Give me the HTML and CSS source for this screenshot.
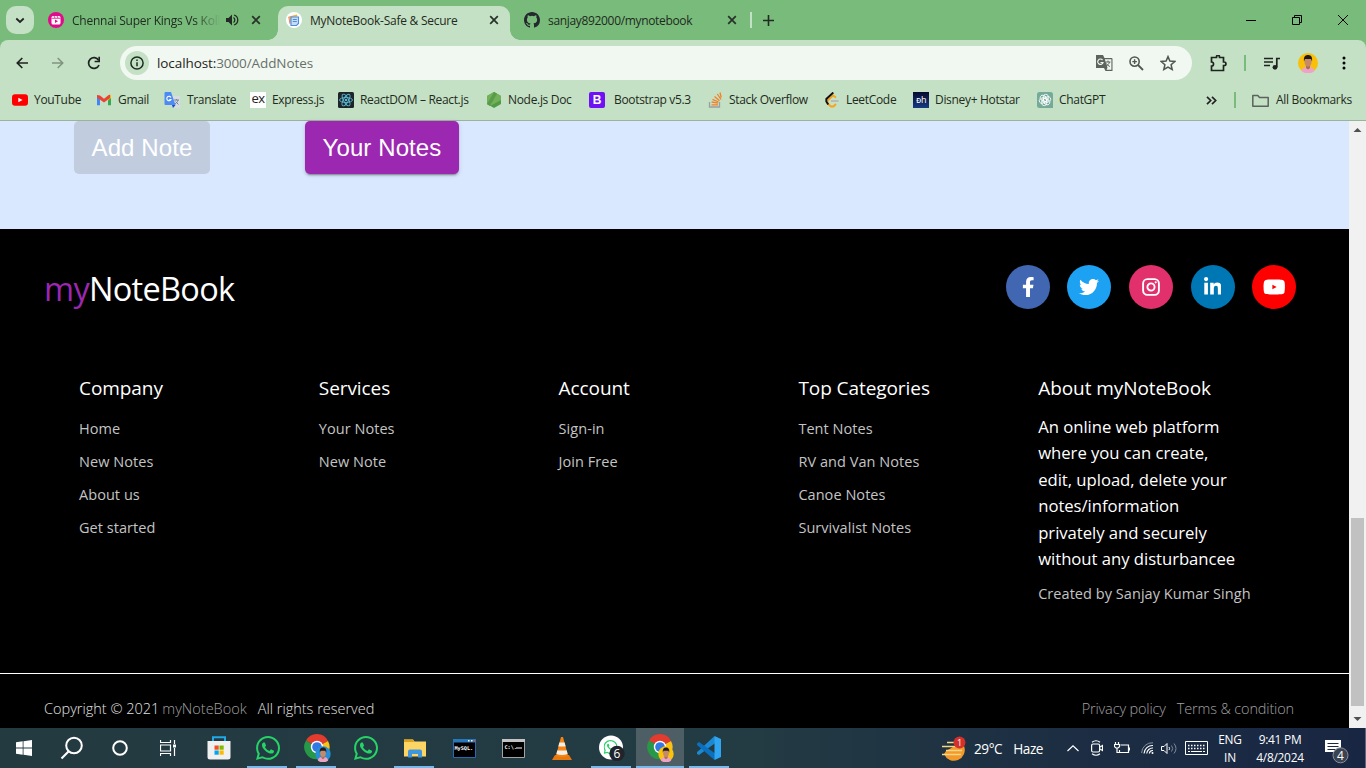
FILE: index.html
```html
<!DOCTYPE html>
<html lang="en">
<head>
<meta charset="utf-8">
<title>MyNoteBook-Safe &amp; Secure</title>
<link rel="stylesheet" href="styles.css">
</head>
<body>
<svg class="defs" aria-hidden="true">
  <symbol id="close" viewBox="0 0 10 10"><path d="M1.2 1.2l7.6 7.6M8.8 1.2L1.2 8.8" fill="none" stroke="#263128" stroke-width="1.7"/></symbol>
  <symbol id="whatsapp" viewBox="0 32 448 448"><path d="M380.9 97.1C339 55.1 283.2 32 223.9 32c-122.4 0-222 99.6-222 222 0 39.1 10.2 77.3 29.6 111L0 480l117.7-30.9c32.4 17.7 68.9 27 106.1 27h.1c122.3 0 224.1-99.6 224.1-222 0-59.3-25.2-115-67.1-157zm-157 341.6c-33.2 0-65.7-8.9-94-25.7l-6.7-4-69.8 18.3L72 359.2l-4.4-7c-18.5-29.4-28.2-63.3-28.2-98.2 0-101.7 82.8-184.5 184.6-184.5 49.3 0 95.6 19.2 130.4 54.1 34.8 34.9 56.2 81.2 56.1 130.5 0 101.8-84.9 184.6-186.6 184.6zm101.2-138.2c-5.5-2.8-32.8-16.2-37.9-18-5.1-1.9-8.8-2.8-12.5 2.8-3.7 5.6-14.3 18-17.6 21.8-3.2 3.7-6.5 4.2-12 1.4-32.6-16.3-54-29.1-75.5-66-5.7-9.8 5.7-9.1 16.3-30.3 1.8-3.7.9-6.9-.5-9.7-1.4-2.8-12.5-30.1-17.1-41.2-4.5-10.8-9.1-9.3-12.5-9.5-3.2-.2-6.9-.2-10.6-.2-3.7 0-9.7 1.4-14.8 6.9-5.1 5.6-19.4 19-19.4 46.3 0 27.3 19.9 53.7 22.6 57.4 2.8 3.7 39.1 59.7 94.8 83.8 35.2 15.2 49 16.5 66.6 13.9 10.7-1.6 32.8-13.4 37.4-26.4 4.6-13 4.6-24.1 3.2-26.4-1.3-2.5-5-3.9-10.5-6.6z" fill="#25d366"/></symbol>
  <symbol id="chrome" viewBox="0 0 26 26"><path d="M13 13 2 6.600A12.300 12.300 0 0 1 24 7z" fill="#e33b2e"/><path d="M13 13 24 7a12.300 12.300 0 0 1-11 18.300z" fill="#fbc116"/><path d="M13 13v12.300A12.300 12.300 0 0 1 2 6.600z" fill="#279847"/><circle cx="13" cy="13" r="6.200" fill="#fff"/><circle cx="13" cy="13" r="4.800" fill="#3478e5"/></symbol>
  <symbol id="person" viewBox="0 0 20 20"><path d="M3.500 18c1-3.500 3.500-4.500 6.500-4.500s5.500 1 6.500 4.500A10 10 0 0 1 3.500 18z" fill="#eda3c4"/><path d="M8 12h4v3l-2 1.500L8 15z" fill="#a86e50"/><ellipse cx="10" cy="9" rx="3.500" ry="4.700" fill="#c48a69"/><path d="M6 8.500C5.500 4 7 2 10 2s4.700 2 4 6.500L13 6H7z" fill="#20191a"/></symbol>
</svg>

<header class="tabs">
  <button class="tab-search"><svg width="10" height="7" viewBox="0 0 10 7"><path d="M1.300 1.500L5 5l3.700-3.500" fill="none" stroke="#1f2420" stroke-width="1.800"/></svg></button>
  <div class="tab tab-first">
    <svg width="16" height="16" viewBox="0 0 16 16"><circle cx="8" cy="8" r="8" fill="#e20a8c"/><rect x="3.500" y="4" width="9" height="8.500" rx="1.500" fill="#fff"/><path d="M3.500 6.300h9M6 4l1 2M9 4l1 2" stroke="#e20a8c" stroke-width=".8"/><path d="M7 7.500l3 1.800-3 1.800z" fill="#e20a8c"/></svg>
    <span class="tab-title fade">Chennai Super Kings Vs Kolk</span>
    <svg class="sound" width="13" height="12" viewBox="0 0 13 12"><path d="M0 4v4h2.500L6 11.500V.5L2.500 4z" fill="#222b23"/><path d="M7.500 3.500c1.700 1 1.700 4 0 5M8 1c5 1.500 5 8.500 0 10" fill="none" stroke="#222b23" stroke-width="1.300"/></svg>
    <svg class="x" width="10" height="10"><use href="#close"/></svg>
  </div>
  <div class="tab tab-active">
    <svg width="16" height="16" viewBox="0 0 16 16"><circle cx="8" cy="8" r="8" fill="#fff"/><path d="M3 4.500l8-2 .5 2-6 .5-1 7z" fill="#f3ae38"/><path d="M3 4.500l1.500 8-1-1L2.300 5z" fill="#e86b55"/><path d="M5 5h7.500v6.500l-2 2H5z" fill="#c5dcf6" stroke="#4a8de0" stroke-width="1.100"/><path d="M6.800 7.500h4M6.800 9.500h4" stroke="#4a8de0" stroke-width="1.100"/></svg>
    <span class="tab-title">MyNoteBook-Safe &amp; Secure</span>
    <svg class="x" width="10" height="10"><use href="#close"/></svg>
  </div>
  <div class="tab tab-last">
    <svg width="16" height="16" viewBox="0 0 16 16"><path fill="#24292e" d="M8 0C3.580 0 0 3.580 0 8c0 3.540 2.290 6.530 5.470 7.590.4.070.55-.17.55-.38 0-.19-.01-.82-.01-1.490-2.010.37-2.530-.49-2.690-.94-.09-.23-.48-.94-.82-1.130-.28-.15-.68-.52-.01-.53.63-.01 1.080.58 1.230.82.72 1.210 1.870.87 2.330.66.07-.52.28-.87.51-1.070-1.780-.2-3.640-.89-3.640-3.950 0-.87.31-1.590.82-2.150-.08-.2-.36-1.020.08-2.120 0 0 .67-.21 2.200.82a7.600 7.600 0 0 1 4 0c1.530-1.040 2.200-.82 2.200-.82.44 1.100.16 1.920.08 2.120.51.56.82 1.270.82 2.150 0 3.070-1.870 3.750-3.650 3.950.29.25.54.73.54 1.480 0 1.070-.01 1.930-.01 2.200 0 .21.15.46.55.38A8.010 8.010 0 0 0 16 8c0-4.420-3.580-8-8-8z"/></svg>
    <span class="tab-title">sanjay892000/mynotebook</span>
    <svg class="x" width="10" height="10"><use href="#close"/></svg>
  </div>
  <i class="tab-sep"></i>
  <svg class="plus" width="11" height="11" viewBox="0 0 11 11"><path d="M5.500 0v11M0 5.500h11" stroke="#222b23" stroke-width="1.600"/></svg>
  <div class="window-controls">
    <svg width="10" height="10" viewBox="0 0 10 10"><path d="M0 5.500h10" stroke="#000"/></svg>
    <svg width="10" height="10" viewBox="0 0 10 10"><path d="M.5 2.500h7v7h-7zM2.500 2.500v-2h7v7h-2" fill="none" stroke="#000"/></svg>
    <svg width="10" height="10" viewBox="0 0 10 10"><path d="M0 0l10 10M10 0L0 10" stroke="#000"/></svg>
  </div>
</header>

<div class="chrome">
  <nav class="toolbar">
    <svg width="12" height="12" viewBox="0 0 12 12"><path d="M12 6H1.500M6.300 1L1.300 6l5 5" fill="none" stroke="#1f2320" stroke-width="1.700"/></svg>
    <svg width="12" height="12" viewBox="0 0 12 12"><path d="M0 6h10.500M5.700 1l5 5-5 5" fill="none" stroke="#82947f" stroke-width="1.600"/></svg>
    <svg width="14" height="14" viewBox="0 0 14 14"><path d="M12 9A5.400 5.400 0 1 1 11.600 4.200" fill="none" stroke="#1f2320" stroke-width="1.700"/><path d="M13 .8v5.400H7.600V4.700h3.800V.8z" fill="#1f2320"/></svg>
    <div class="omnibox">
      <span class="info"><svg width="14" height="14" viewBox="0 0 14 14"><circle cx="7" cy="7" r="6.100" fill="none" stroke="#1e2c20" stroke-width="1.500"/><path d="M7 6.200v4M7 3.500v1.600" stroke="#1e2c20" stroke-width="1.500"/></svg></span>
      <span class="url"><b>localhost:</b>3000/AddNotes</span>
      <div class="omni-actions">
        <svg width="17" height="17" viewBox="0 0 17 17"><path d="M0 0h7l1.500 3H15.500a1 1 0 0 1 1 1v12h-7L8 13H0z" fill="#5d645e"/><path d="M8.800 4.200h6.600v10.600H10.500l1-2z" fill="#f1f8f1"/><path d="M6.500 5A2.700 2.700 0 1 0 7 7.500H4.500" fill="none" stroke="#f1f8f1" stroke-width="1.200"/><path d="M9.500 7h5M12 5.500V7M13.500 7c-.5 2-2 3.500-3.500 4M10.500 8.500c.8 1.500 2 2.300 3.300 3" fill="none" stroke="#5d645e"/></svg>
        <svg width="15" height="15" viewBox="0 0 15 15"><circle cx="5.600" cy="5.600" r="4.600" fill="none" stroke="#505751" stroke-width="1.600"/><path d="M9 9l5 5" stroke="#505751" stroke-width="1.800"/><path d="M5.600 3.300v4.600M3.300 5.600h4.600" stroke="#505751" stroke-width="1.400"/></svg>
        <svg width="16" height="16" viewBox="0 0 16 16"><path d="M8 1.600l1.900 4.500 4.900.4-3.700 3.200 1.100 4.800L8 12l-4.200 2.500 1.100-4.800L1.200 6.500l4.900-.4z" fill="none" stroke="#505751" stroke-width="1.500"/></svg>
      </div>
    </div>
    <svg width="17" height="17" viewBox="0 0 17 17"><path d="M1.500 2.500h5V1.800a1.500 1.500 0 0 1 3 0v.7h4v4.500h.7a1.500 1.500 0 0 1 0 3.500h-.7v5H1.500v-4.300c2.700 0 2.700-4.200 0-4.200z" fill="none" stroke="#1f2320" stroke-width="1.700"/></svg>
    <i class="sep"></i>
    <svg width="16" height="13" viewBox="0 0 16 13"><path d="M0 1.500h9M0 5h9M0 8.500h6" stroke="#1f2320" stroke-width="1.700"/><path d="M12.800 10V1.500H16" fill="none" stroke="#1f2320" stroke-width="1.700"/><circle cx="11" cy="10.300" r="2.400" fill="#1f2320"/></svg>
    <svg width="20" height="20" viewBox="0 0 20 20"><circle cx="10" cy="10" r="10" fill="#fabf07"/><use href="#person"/></svg>
    <svg width="4" height="14" viewBox="0 0 4 14"><circle cx="2" cy="2" r="1.500"/><circle cx="2" cy="7" r="1.500"/><circle cx="2" cy="12" r="1.500"/></svg>
  </nav>
  <nav class="bookmarks">
    <a><svg width="16" height="16" viewBox="0 0 16 16"><rect y="2.300" width="16" height="11.400" rx="3" fill="#f00"/><path d="M6.300 5.700l4.300 2.300-4.300 2.300z" fill="#fff"/></svg><span>YouTube</span></a>
    <a><svg width="16" height="16" viewBox="0 0 16 16"><path d="M1 3v10.300h3V7z" fill="#4285f4"/><path d="M15 3v10.300h-3V7z" fill="#34a853"/><path d="M12 3.500l3-.8V6l-3 2.500z" fill="#fbbc04"/><path d="M1 3l3 .5 4 3.200 4-3.200 2-1V6L8 10.500 1 5.500z" fill="#ea4335"/></svg><span>Gmail</span></a>
    <a><svg width="17" height="16" viewBox="0 0 17 16"><path d="M7 4h9v12H9z" fill="#d7dce1"/><path d="M1 0h6l4.500 13H1.500A1 1 0 0 1 .5 12V1z" fill="#4c8bf5"/><path d="M8 13h3.500L9 16z" fill="#1b48c4"/><path d="M7 5.500A2.200 2.200 0 1 0 7 7.500H5.300" fill="none" stroke="#fff" stroke-width="1.100"/><path d="M10 8h5M12.500 7v1M14 8c-.5 2-1.500 3-3 4M11.500 9.500l3 3" fill="none" stroke="#738593"/></svg><span>Translate</span></a>
    <a><i class="ex">ex</i><span>Express.js</span></a>
    <a><svg width="16" height="16" viewBox="0 0 16 16"><rect width="16" height="16" rx="1.500" fill="#1d252b"/><g fill="none" stroke="#5cb9d4" stroke-width=".9"><ellipse cx="8" cy="8" rx="6.500" ry="2.500"/><ellipse cx="8" cy="8" rx="6.500" ry="2.500" transform="rotate(60 8 8)"/><ellipse cx="8" cy="8" rx="6.500" ry="2.500" transform="rotate(120 8 8)"/></g><circle cx="8" cy="8" r="1.300" fill="#5cb9d4"/></svg><span>ReactDOM – React.js</span></a>
    <a><svg width="16" height="16" viewBox="0 0 16 16"><path d="M8 0l7 4v8l-7 4-7-4V4z" fill="#519b47"/><path d="M8 0l7 4v4L4 14l-3-2V4z" fill="#72b159"/><path d="M8 0l3 1.700L4 14l-3-2z" fill="#438a3d" opacity=".55"/></svg><span>Node.js Doc</span></a>
    <a class="wide-gap"><i class="bs">B</i><span>Bootstrap v5.3</span></a>
    <a><svg width="15" height="16" viewBox="0 0 15 16"><path d="M1.500 10v5h10v-5" fill="none" stroke="#9b9fa1" stroke-width="1.300"/><path d="M3.500 12.800h6.500M3.600 10l6.400 1.200M4.500 7.300l6 2.700M6.500 4.500l5 4.300M9.300 2l3.700 5.500M12 .5l1.200 5" stroke="#f48024" stroke-width="1.300"/></svg><span>Stack Overflow</span></a>
    <a><svg width="16" height="16" viewBox="0 0 16 16"><path d="M12 5.500L9 3.500 3.500 8.500v3L7 14.500h2.500L12 12" fill="none" stroke="#faa21b" stroke-width="1.900"/><path d="M9.300.5L2.300 7v2.500l2 3" fill="none" stroke="#111" stroke-width="1.900"/><path d="M7 9h7.500" stroke="#b4b5b1" stroke-width="1.700"/></svg><span>LeetCode</span></a>
    <a><i class="dh">ᴆh</i><span>Disney+ Hotstar</span></a>
    <a><svg width="16" height="16" viewBox="0 0 16 16"><path d="M2.500 0h11A2.500 2.500 0 0 1 16 2.500V16H2.500A2.500 2.500 0 0 1 0 13.500v-11A2.500 2.500 0 0 1 2.500 0z" fill="#75aa9a"/><g fill="none" stroke="#fff" stroke-width=".8"><rect id="petal" x="6.300" y="2.300" width="5" height="7.500" rx="2.500"/><use href="#petal" transform="rotate(60 8 8)"/><use href="#petal" transform="rotate(120 8 8)"/><use href="#petal" transform="rotate(180 8 8)"/><use href="#petal" transform="rotate(240 8 8)"/><use href="#petal" transform="rotate(300 8 8)"/></g></svg><span>ChatGPT</span></a>
    <div class="all-bookmarks">
      <svg width="11" height="9" viewBox="0 0 11 9"><path d="M1 .8l3.700 3.700L1 8.200M6 .8l3.700 3.700L6 8.200" fill="none" stroke="#222" stroke-width="1.700"/></svg>
      <i class="sep"></i>
      <a><svg width="17" height="13" viewBox="0 0 17 13"><path d="M.8 1.500h5l1.700 2h8.700v8.700H.8z" fill="none" stroke="#5b635c" stroke-width="1.500" stroke-linejoin="round"/></svg><span>All Bookmarks</span></a>
    </div>
  </nav>
</div>

<div class="viewport">
  <main>
    <section class="actions">
      <button class="btn btn-add">Add Note</button>
      <button class="btn btn-your">Your Notes</button>
    </section>
    <footer>
      <div class="footer-top">
        <div class="logo"><span>my</span>NoteBook</div>
        <div class="socials">
          <a class="fb"><svg height="20" viewBox="0 0 320 512"><path d="M279.140 288l14.220-92.660h-88.910v-60.130c0-25.350 12.420-50.060 52.240-50.060h40.420V6.260S260.430 0 225.360 0c-73.220 0-121.080 44.380-121.080 124.720v70.620H22.890V288h81.390v224h100.170V288z"/></svg></a>
          <a class="tw"><svg height="20" viewBox="0 0 512 512"><path d="M459.370 151.716c.325 4.548.325 9.097.325 13.645 0 138.720-105.583 298.558-298.558 298.558-59.452 0-114.680-17.219-161.137-47.106 8.447.974 16.568 1.299 25.340 1.299 49.055 0 94.213-16.568 130.274-44.832-46.132-.975-84.792-31.188-98.112-72.772 6.498.974 12.995 1.624 19.818 1.624 9.421 0 18.843-1.300 27.614-3.573-48.081-9.747-84.143-51.980-84.143-102.985v-1.299c13.969 7.797 30.214 12.670 47.431 13.319-28.264-18.843-46.781-51.005-46.781-87.391 0-19.492 5.197-37.360 14.294-52.954 51.655 63.675 129.300 105.258 216.365 109.807-1.624-7.797-2.599-15.918-2.599-24.040 0-57.828 46.782-104.934 104.934-104.934 30.213 0 57.502 12.670 76.670 33.137 23.715-4.548 46.456-13.320 66.599-25.340-7.798 24.366-24.366 44.833-46.132 57.827 21.117-2.273 41.584-8.122 60.426-16.243-14.292 20.791-32.161 39.308-52.628 54.253z"/></svg></a>
          <a class="ig"><svg height="20" viewBox="0 0 20 20"><rect x="2.100" y="2.100" width="15.800" height="15.800" rx="4.300" fill="none" stroke="#fff" stroke-width="1.900"/><circle cx="10" cy="10" r="3.600" fill="none" stroke="#fff" stroke-width="1.900"/><circle cx="14.700" cy="5.300" r="1.100"/></svg></a>
          <a class="li"><svg height="20" viewBox="0 0 448 512"><path d="M100.280 448H7.400V148.900h92.880zM53.790 108.100C24.090 108.100 0 83.500 0 53.800a53.790 53.790 0 0 1 107.580 0c0 29.700-24.100 54.300-53.790 54.300zM447.900 448h-92.680V302.400c0-34.700-.7-79.200-48.290-79.200-48.290 0-55.690 37.700-55.690 76.700V448h-92.780V148.900h89.080v40.800h1.300c12.400-23.500 42.690-48.300 87.880-48.300 94 0 111.280 61.900 111.280 142.300V448z"/></svg></a>
          <a class="yt"><svg height="20" viewBox="0 0 576 512"><path d="M549.655 124.083c-6.281-23.650-24.787-42.276-48.284-48.597C458.781 64 288 64 288 64S117.220 64 74.629 75.486c-23.497 6.322-42.003 24.947-48.284 48.597-11.412 42.867-11.412 132.305-11.412 132.305s0 89.438 11.412 132.305c6.281 23.650 24.787 41.500 48.284 47.821C117.220 448 288 448 288 448s170.780 0 213.371-11.486c23.497-6.321 42.003-24.171 48.284-47.821 11.412-42.867 11.412-132.305 11.412-132.305s0-89.438-11.412-132.305zm-310 192V196l110 60.500z"/></svg></a>
        </div>
      </div>
      <div class="columns">
        <div class="col"><h2>Company</h2><a>Home</a><a>New Notes</a><a>About us</a><a>Get started</a></div>
        <div class="col"><h2>Services</h2><a>Your Notes</a><a>New Note</a></div>
        <div class="col"><h2>Account</h2><a>Sign-in</a><a>Join Free</a></div>
        <div class="col"><h2>Top Categories</h2><a>Tent Notes</a><a>RV and Van Notes</a><a>Canoe Notes</a><a>Survivalist Notes</a></div>
        <div class="col about"><h2>About myNoteBook</h2><p>An online web platform<br>where you can create,<br>edit, upload, delete your<br>notes/information<br>privately and securely<br>without any disturbancee</p><a>Created by Sanjay Kumar Singh</a></div>
      </div>
      <div class="legal">
        <span>Copyright © 2021</span><a class="brand">myNoteBook</a><span class="rights">All rights reserved</span>
        <a class="privacy">Privacy policy</a><a class="terms">Terms &amp; condition</a>
      </div>
    </footer>
  </main>
  <aside class="scrollbar">
    <svg width="17" height="17" viewBox="0 0 17 17"><path d="M4.500 11l4-4 4 4z" fill="#505050"/></svg>
    <div class="thumb"></div>
    <svg width="17" height="17" viewBox="0 0 17 17"><path d="M4.500 6l4 4 4-4z" fill="#505050"/></svg>
  </aside>
</div>

<div class="taskbar">
  <div class="apps">
    <span><svg width="16" height="16" viewBox="0 0 16 16"><path d="M0 2.300L6.700 1.300v6.200H0zM7.500 1.200L16 0v7.500H7.500zM0 8.500h6.700v6.200L0 13.700zM7.500 8.500H16V16l-8.500-1.200z" fill="#fff"/></svg></span>
    <span><svg width="24" height="24" viewBox="0 0 24 24"><circle cx="14" cy="9.500" r="7.800" fill="none" stroke="#fff" stroke-width="2"/><path d="M8.500 15.500L1.500 22.500" stroke="#fff" stroke-width="2.200"/></svg></span>
    <span><svg width="16" height="16" viewBox="0 0 16 16"><circle cx="8" cy="8" r="6.800" fill="none" stroke="#fff" stroke-width="2"/></svg></span>
    <span><svg width="17" height="16" viewBox="0 0 17 16"><path d="M.5 0v2.500h10V0M.5 16v-2.500h10V16M.5 5h10v6H.5zM14.500 0v4M14.500 8v8" fill="none" stroke="#fff" stroke-width="1.200"/><path d="M13 4.500h3v3h-3z" fill="#fff"/></svg></span>
    <span><svg width="24" height="24" viewBox="0 0 24 24"><path d="M6 6V1.200h12V6" fill="none" stroke="#22a9e8" stroke-width="2"/><path d="M.5 5h23v16a2.500 2.500 0 0 1-2.500 2.500H3A2.500 2.500 0 0 1 .5 21z" fill="#f0f0f0"/><path d="M7.500 9.500h4.200v4.200H7.500z" fill="#f25022"/><path d="M12.500 9.500h4.200v4.200h-4.200z" fill="#7fba00"/><path d="M7.500 14.500h4.200v4.200H7.500z" fill="#00a4ef"/><path d="M12.500 14.500h4.200v4.200h-4.200z" fill="#ffb900"/></svg></span>
    <span class="run"><svg width="24" height="24"><use href="#whatsapp"/></svg></span>
    <span class="run"><svg width="28" height="28" viewBox="0 0 28 28"><use href="#chrome" x="1" width="26" height="26"/><circle cx="20" cy="20" r="7.700" fill="#278ed5"/><svg x="12" y="12" width="16" height="16"><use href="#person" width="16" height="16"/></svg></svg></span>
    <span><svg width="24" height="24"><use href="#whatsapp"/></svg></span>
    <span class="run"><svg width="22" height="19" viewBox="0 0 22 19"><path d="M0 .5h9l1.500 2H22v15H0z" fill="#fcd565"/><path d="M0 .5h9l1 2.500H0z" fill="#dba21c"/><path d="M4 18.500v-6a2 2 0 0 1 2-2h10a2 2 0 0 1 2 2v6h-4V15H8v3.500z" fill="#4095dc"/></svg></span>
    <span><svg width="23" height="19" viewBox="0 0 23 19"><path d="M.5.500h22v18H.5z" fill="#000" stroke="#2b6ab3"/><path d="M0 0h23v3.500H0z" fill="#2877ba"/><path d="M15 1h1.500v1.500H15zM18 1h1.500v1.500H18z" fill="#fff"/><path d="M20.500 1H22v1.500h-1.500z" fill="#f04a24"/><text x="1.500" y="11" class="pixel">MySQL.</text></svg></span>
    <span><svg width="23" height="19" viewBox="0 0 23 19"><path d="M.5.500h22v18H.5z" fill="#000" stroke="#a4a4a4"/><path d="M0 0h23v3H0z" fill="#c3c3c3"/><text x="2.500" y="9.500" class="pixel">C:\.</text><path d="M14 9h6" stroke="#fff"/></svg></span>
    <span><svg width="20" height="23" viewBox="0 0 20 23"><path d="M3 18h14l3 5H0z" fill="#e9780d"/><path d="M9 0h2l5 18.500q-6 3-12 0z" fill="#f58412"/><path d="M7.400 5.500h5.200l1.100 4H6.300zM5.200 13.500h9.600l.8 3.500q-5.600 2-11.200 0z" fill="#f3eee8"/></svg></span>
    <span class="run"><svg width="27" height="26" viewBox="0 0 27 26"><circle cx="13" cy="12.500" r="12" fill="#fff"/><svg x="5.500" y="5" width="14" height="14"><use href="#whatsapp"/></svg><circle cx="19" cy="18.500" r="7.700" fill="#20242b"/><text x="19" y="23" class="badge">6</text></svg></span>
    <span class="run active"><svg width="28" height="28" viewBox="0 0 28 28"><use href="#chrome" x="1" width="26" height="26"/><circle cx="20" cy="20" r="7.700" fill="#fac40b"/><svg x="12" y="12" width="16" height="16"><use href="#person" width="16" height="16"/></svg></svg></span>
    <span class="run"><svg width="24" height="24" viewBox="0 0 24 24"><path d="M17.500 0l-15 14-2.500 2v2l2 1L19 6.500z" fill="#1b89d3"/><path d="M0 7.500l2-1.500L19 18l-1.500 6L0 9z" fill="#0b70bd"/><path d="M17.500 0L24 3v18l-6.500 3z" fill="#30a6f2"/></svg></span>
  </div>
  <div class="tray">
    <svg width="26" height="25" viewBox="0 0 26 25"><path d="M3 18a10.500 10.500 0 0 0 20-8l-6-2-12 7z" fill="#f39a2a"/><path d="M6 6.500h8M1 10.500h13M5 14.500h16M1 18.500h19" stroke="#f7d784" stroke-width="1.700"/><circle cx="18.500" cy="6.500" r="5.900" fill="#d4312d"/><text x="18.500" y="9.700" class="alert">1</text></svg>
    <span class="weather"><span>29°C</span><span>Haze</span></span>
    <svg width="12" height="7" viewBox="0 0 12 7"><path d="M.5 6L6 .8 11.500 6" fill="none" stroke="#fff" stroke-width="1.200"/></svg>
    <svg width="12" height="16" viewBox="0 0 12 16"><rect x=".6" y="4" width="8" height="8" rx="1.500" fill="none" stroke="#fff" stroke-width="1.200"/><path d="M9 7l2.500-1.500v5L9 9M1 2.200q4-3 8 0M1 13.800q4 3 8 0" fill="none" stroke="#fff" stroke-width="1.100"/></svg>
    <svg width="16" height="12" viewBox="0 0 16 12"><path d="M6.500 3h8v7.500h-9V8M15.500 5.500v3" fill="none" stroke="#fff" stroke-width="1.200"/><path d="M1.500 0v2M4.500 0v2M.5 2.500h5v2.200L4 6H2L.5 4.700zM3 6v4.500h2.500" fill="none" stroke="#fff" stroke-width="1.200"/></svg>
    <svg width="13" height="12" viewBox="0 0 13 12"><g fill="none" stroke="#fff"><path d="M.6 11A10.500 10.500 0 0 1 12 .8" stroke="#8891a0"/><path d="M3 11.500A8.500 8.500 0 0 1 12 3.500M5.700 11.500A6 6 0 0 1 12 6M8.300 11.500A3.500 3.500 0 0 1 12 8.500" stroke-width="1.100"/></g><circle cx="11.500" cy="11" r="1" fill="#fff"/></svg>
    <svg width="16" height="13" viewBox="0 0 16 13"><path d="M.5 4.500v4H3l3 3v-10l-3 3z" fill="none" stroke="#fff"/><path d="M8 5q1.200 1.500 0 3" fill="none" stroke="#fff"/><path d="M10.500 3.500q2.500 3 0 6M13 1.500q4 5 0 10" fill="none" stroke="#7e889b"/></svg>
    <svg width="23" height="14" viewBox="0 0 23 14"><path d="M.5.500h22v13H.5z" fill="none" stroke="#fff"/><path d="M3 4.500h17M3 7.500h17" stroke="#fff" stroke-width="1.300" stroke-dasharray="1.500 1.500"/><path d="M3 10.500h2M6 10.500h11M18 10.500h2" stroke="#fff"/></svg>
    <span class="two">ENG<br>IN</span>
    <span class="two clock">9:41 PM<br>4/8/2024</span>
    <svg class="notices" width="25" height="25" viewBox="0 0 25 25"><path d="M1 1h16v12h-4v4l-4-4H1z" fill="#fff"/><path d="M3.500 4.500h11M3.500 7.500h11M3.500 10.500h8" stroke="#1b2945" stroke-width="1.100"/><circle cx="16.500" cy="16.300" r="7.500" fill="#3b4250" stroke="#8a909c"/><text x="16.500" y="20.500" class="notice">4</text></svg>
  </div>
</div>
</body>
</html>
```
FILE: styles.css
```css
* { box-sizing: border-box; }
body { margin: 0; width: 1366px; height: 768px; overflow: hidden; display: flex; flex-direction: column; background: #78bb7b; font-family: "Open Sans", "Noto Sans", sans-serif; color: #1f2a20; }
svg { display: block; flex: none; }
button { border: 0; padding: 0; font: inherit; }
.defs { position: absolute; width: 0; height: 0; }

/* Tab strip */
.tabs { height: 40px; flex: none; display: grid; grid-template-columns: 6px 28px 14px 230px 232px 14px 226px 2px 11px 11px 1fr 138px; align-items: center; background: #78bb7b; }
.tab-search { grid-column: 2; width: 28px; height: 28px; border-radius: 10px; background: #c4e1c5; display: grid; place-items: center; }
.tab { display: flex; align-items: center; gap: 8px; font-size: 12px; letter-spacing: -.25px; white-space: nowrap; }
.tab-first { grid-column: 4; padding-right: 17px; }
.tab-title { height: 18px; line-height: 18px; padding-top: 1px; }
.fade { width: 148px; overflow: hidden; -webkit-mask-image: linear-gradient(90deg, #000 122px, transparent 148px); mask-image: linear-gradient(90deg, #000 122px, transparent 148px); }
.sound { margin-left: -2px; }
.x { margin-left: auto; }
.tab-active { grid-column: 5; position: relative; align-self: end; height: 34px; padding: 0 11px 6px 8px; background: #c4e1c5; border-radius: 10px 10px 0 0; }
.tab-active::before, .tab-active::after { content: ""; position: absolute; bottom: 0; width: 10px; height: 10px; }
.tab-active::before { left: -10px; background: radial-gradient(circle at 0 0, transparent 9.5px, #c4e1c5 10px); }
.tab-active::after { right: -10px; background: radial-gradient(circle at 100% 0, transparent 9.5px, #c4e1c5 10px); }
.tab-last { grid-column: 7; padding-right: 13px; letter-spacing: -.33px; }
.tab-sep { grid-column: 8; width: 2px; height: 16px; background: #c4e1c5; }
.plus { grid-column: 10; }
.window-controls { grid-column: 12; display: grid; grid-template-columns: repeat(3, 46px); justify-items: center; }

/* Toolbar and bookmarks */
.chrome { height: 81px; flex: none; background: #c4e1c5; border-radius: 8px 8px 0 0; border-bottom: 1px solid #9bb39c; }
.toolbar { height: 46px; display: grid; grid-template-columns: 36px 36px 36px 8px 1072px 52px 2px 52px 20px 52px; padding-left: 4px; align-items: center; justify-items: center; }
.omnibox { grid-column: 5; width: 1072px; height: 34px; border-radius: 17px; background: #f1f8f1; display: flex; align-items: center; padding: 0 16px 0 5px; }
.info { width: 24px; height: 24px; border-radius: 50%; background: #c4e1c5; display: grid; place-items: center; }
.url { margin-left: 8px; font-size: 13.5px; letter-spacing: -.09px; color: #687069; }
.url b { font-weight: 400; color: #1f2320; }
.omni-actions { margin-left: auto; display: flex; gap: 16px; align-items: center; }
.sep { width: 2px; height: 16px; background: #78bb7b; }
.bookmarks { height: 28px; padding-left: 12px; display: grid; grid-template-columns: 84px 68px 86px 88px 148px 103px 119px 116px 89px 124px 169px 1fr; align-items: center; font-size: 12px; letter-spacing: -.32px; }
.bookmarks a { display: flex; align-items: center; gap: 6px; white-space: nowrap; }
.bookmarks a span { line-height: 16px; }
.bookmarks .wide-gap { gap: 9px; }
.ex { width: 16px; height: 16px; background: #fff; color: #222; font-size: 13px; font-style: normal; line-height: 13px; letter-spacing: -.6px; text-align: center; }
.bs { width: 16px; height: 16px; border-radius: 2px; background: #7011f5; color: #fff; font: 700 12px/16px "Liberation Sans", sans-serif; text-align: center; }
.dh { width: 16px; height: 16px; background: linear-gradient(#060b2e, #163a83); color: #fff; font-size: 9px; font-style: normal; line-height: 15px; text-align: center; }
.all-bookmarks { display: flex; align-items: center; }
.all-bookmarks .sep { margin: 0 16px 0 17px; }
.all-bookmarks a { gap: 7px; }

/* Page */
.viewport { height: 607px; flex: none; display: flex; }
main { width: 1349px; background: #dae8ff; }
.actions { height: 108px; padding-left: 74px; display: flex; gap: 95px; align-items: flex-start; }
.btn { height: 53px; border-radius: 5px; color: #fff; font: 24px/53px "Liberation Sans", Arial, sans-serif; letter-spacing: .1px; }
.btn-add { width: 136px; background: #c1cddf; }
.btn-your { width: 154px; background: #9c27b0; box-shadow: 0 3px 1px -2px rgba(0,0,0,.2), 0 2px 2px rgba(0,0,0,.14), 0 1px 5px rgba(0,0,0,.12); }
footer { height: 499px; background: #000; color: #fff; }
.footer-top { height: 144px; padding: 36px 53px 0 44px; display: flex; justify-content: space-between; align-items: flex-start; }
.logo { font-size: 32.5px; line-height: 46px; letter-spacing: -.7px; padding-top: 1px; }
.logo span { color: #9c27b0; }
.socials { display: flex; gap: 17.5px; }
.socials a { width: 44px; height: 44px; border-radius: 50%; display: grid; place-items: center; fill: #fff; }
.fb { background: #4267b2; }
.socials .tw { background: #1da1f2; margin: 0 .5px 0 -.5px; }
.ig { background: #e1306c; }
.li { background: #0077b5; }
.yt { background: #f00; }
.columns { height: 300px; padding-left: 79px; display: grid; grid-template-columns: repeat(5, 239.8px); }
.col h2 { margin: 0 0 9px; font-size: 19px; line-height: 30px; font-weight: 400; letter-spacing: -.07px; }
.col a { display: block; height: 33px; line-height: 33px; font-size: 14.5px; font-weight: 500; letter-spacing: .05px; color: #c4c4c4; white-space: nowrap; }
.about p { margin: 0 0 5px; padding-top: 2px; font-size: 16.7px; line-height: 26.4px; letter-spacing: -.04px; }
.legal { height: 55px; border-top: 1px solid #fff; display: flex; align-items: center; padding: 14px 55px 0 44px; font-size: 14.5px; letter-spacing: 0; font-weight: 300; color: #e2e2e2; white-space: nowrap; }
.legal a { color: #a0a0a0; }
.brand { margin-left: 3px; }
.rights { margin-left: 11px; }
.legal .privacy { margin-left: auto; letter-spacing: -.15px; }
.legal .terms { margin-left: 11px; letter-spacing: -.15px; }
.scrollbar { width: 17px; background: #f1f1f1; display: flex; flex-direction: column; }
.thumb { width: 13px; height: 188px; margin: 380px 0 5px 2px; background: #c1c1c1; }

/* Taskbar */
.taskbar { height: 40px; display: flex; justify-content: space-between; background: linear-gradient(90deg, #233a41 0, #233b43 55%, #1d2f43 75%, #192643); color: #fff; }
.apps { display: grid; grid-template-columns: 48px 48px 48px 50px repeat(11, 49.1px); }
.apps > span { display: grid; place-items: center; position: relative; }
.apps > span:nth-child(4) { padding-right: 2px; }
.run::after { content: ""; position: absolute; left: 4px; bottom: 0; width: 40px; height: 2px; background: #76b9ed; }
.apps .active { background: #4d5e65; width: 48px; }
.active::after { left: 0; width: 48px; }
.pixel { font: 700 5.2px "DejaVu Sans Mono", monospace; fill: #fff; }
.badge { font-size: 12px; fill: #fff; text-anchor: middle; }
.alert { font-size: 9px; fill: #fff; text-anchor: middle; }
.notice { font-size: 12px; fill: #fff; text-anchor: middle; }
.tray { width: 425px; display: grid; grid-template-columns: 26px 7px 69px 24px 12px 12px 12px 11px 16px 11px 13px 7px 16px 8px 23px 10px 24px 13px 50px 19px 25px; align-items: center; justify-items: center; border-right: 1px solid #5f6878; }
.tray > :nth-child(1) { grid-column: 1; }
.tray > :nth-child(2) { grid-column: 3; }
.tray > :nth-child(3) { grid-column: 5; }
.tray > :nth-child(4) { grid-column: 7; }
.tray > :nth-child(5) { grid-column: 9; }
.tray > :nth-child(6) { grid-column: 11; }
.tray > :nth-child(7) { grid-column: 13; }
.tray > :nth-child(8) { grid-column: 15; }
.tray > :nth-child(9) { grid-column: 17; }
.tray > :nth-child(10) { grid-column: 19; }
.tray > :nth-child(11) { grid-column: 21; }
.notices { margin-top: 6px; }
.weather { display: flex; justify-content: space-between; width: 69px; font-size: 13.6px; letter-spacing: -.45px; white-space: nowrap; }
.two { font-size: 11.9px; letter-spacing: -.25px; line-height: 18px; text-align: center; white-space: nowrap; margin-top: -1px; }
```
